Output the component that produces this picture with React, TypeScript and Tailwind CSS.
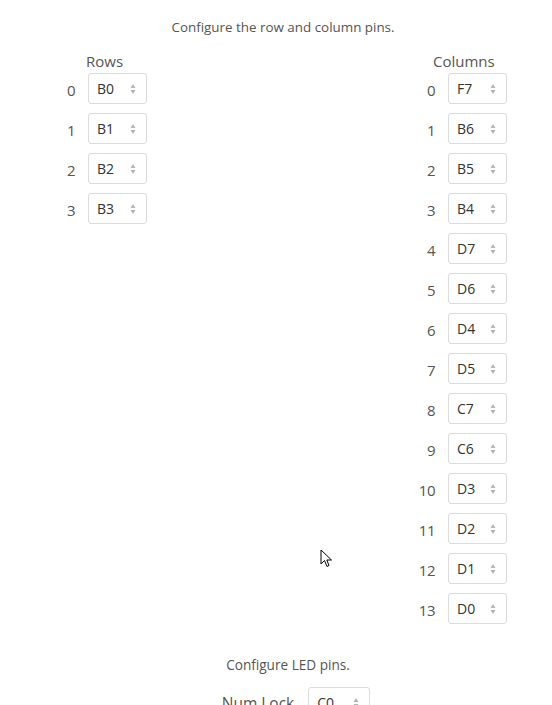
import React from "react";

const rows = ["B0", "B1", "B2", "B3"];
const cols = ["F7", "B6", "B5", "B4", "D7", "D6", "D4", "D5", "C7", "C6", "D3", "D2", "D1", "D0"];

function Arrows() {
  return (
    <svg width="6" height="12" viewBox="0 0 6 12" className="shrink-0">
      <path d="M3 1 L5.5 5 L0.5 5 Z" fill="#b5b5b5" />
      <path d="M3 11 L5.5 7 L0.5 7 Z" fill="#b5b5b5" />
    </svg>
  );
}

function Select({ value }: { value: string }) {
  return (
    <div className="flex items-center justify-between w-[59px] h-[31px] border border-[#dcdcdc] rounded-[3px] pl-[8px] pr-[10px] text-[14px] text-[#333]">
      <span>{value}</span>
      <Arrows />
    </div>
  );
}

function PinRow({ n, value }: { n: number; value: string }) {
  return (
    <div className="flex items-center h-[31px] mb-[9px]">
      <div className="w-[22px] text-right text-[15px] tracking-[-0.5px] text-[#555] pr-[1px] pt-[3px]">{n}</div>
      <div className="w-[12px]" />
      <Select value={value} />
    </div>
  );
}

export default function App() {
  return (
    <div
      className="w-[552px] h-[705px] overflow-hidden bg-white relative"
      style={{ fontFamily: '"Open Sans", "Noto Sans", sans-serif' }}
    >
      <p className="text-center text-[13.4px] text-[#555] pt-[17px] pl-[14px] leading-[20px]">
        Configure the row and column pins.
      </p>
      <div className="flex justify-between pl-[54px] pr-[45px] mt-[14px]">
        <div className="flex flex-col">
          <div className="text-[15px] text-[#555] leading-[20px] h-[22px] pl-[32px]">Rows</div>
          {rows.map((r, i) => (
            <PinRow key={r} n={i} value={r} />
          ))}
        </div>
        <div className="flex flex-col">
          <div className="text-[15px] text-[#555] leading-[20px] h-[22px] pl-[19px]">Columns</div>
          {cols.map((c, i) => (
            <PinRow key={c} n={i} value={c} />
          ))}
        </div>
      </div>
      <p className="text-center text-[13.6px] text-[#555] mt-[22px] pl-[24px] leading-[20px]">
        Configure LED pins.
      </p>
      <div className="flex items-center justify-center mt-[12px] pl-[40px] gap-[14px]">
        <span className="text-[15.5px] text-[#555] pt-[3px]">Num Lock</span>
        <div className="flex items-center justify-between w-[62px] h-[31px] border border-[#dcdcdc] rounded-[3px] pl-[8px] pr-[10px] text-[14px] text-[#333]">
          <span>C0</span>
          <Arrows />
        </div>
      </div>
      <svg className="absolute left-[320px] top-[549px]" width="14" height="20" viewBox="0 0 14 20">
        <path d="M1 1 L1 15 L4.5 11.5 L7 17.5 L9 16.5 L6.8 11 L11.5 11 Z" fill="white" stroke="black" strokeWidth="1" strokeLinejoin="miter" />
      </svg>
    </div>
  );
}
